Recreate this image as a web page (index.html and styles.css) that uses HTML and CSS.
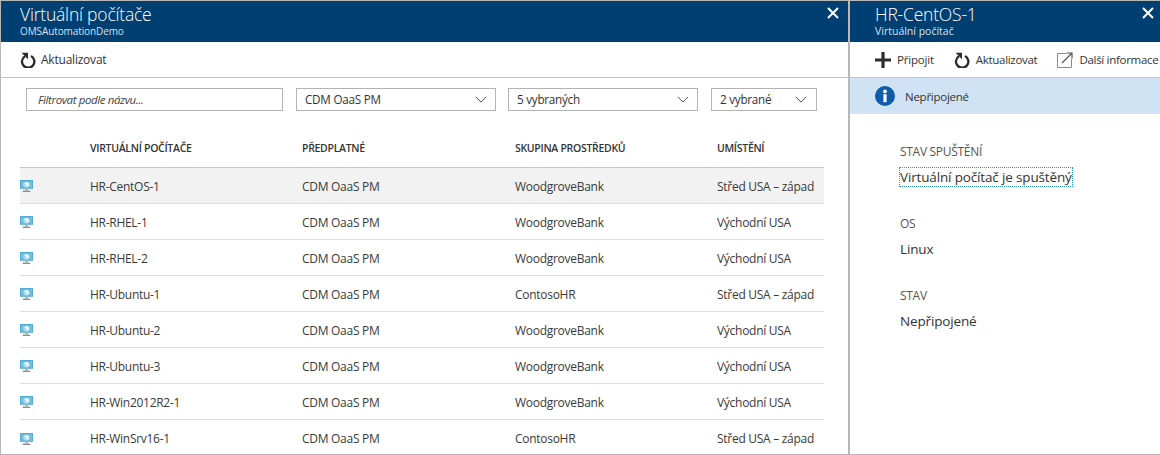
FILE: index.html
```html
<!DOCTYPE html>
<html lang="cs">
<head>
<meta charset="utf-8">
<title>Virtuální počítače</title>
<link rel="stylesheet" href="styles.css">
</head>
<body>
<svg width="0" height="0" class="defs">
  <defs>
    <symbol id="refresh" viewBox="0 0 16 16">
      <path d="M5 4.2A6.2 6.2 0 1 0 11 4" fill="none" stroke="currentColor" stroke-width="2.3"/>
      <path d="M1.6 .8H8V7.2Z" fill="currentColor"/>
    </symbol>
    <symbol id="vm" viewBox="0 0 14 13">
      <rect x="0" y="0" width="14" height="9.5" fill="#4fa6cf"/>
      <rect x="1" y="1" width="12" height="7.5" fill="#6fc0de"/>
      <path d="M7 2 10 3.5V6.5L7 8 4 6.5V3.5Z" fill="#e8f5fa"/>
      <path d="M7 5V8L4 6.5V3.5Z" fill="#a9dcee"/>
      <rect x="5.5" y="9.5" width="3" height="2" fill="#b5b6b7"/>
      <rect x="3" y="11.5" width="8" height="1.5" fill="#8d8d8d"/>
    </symbol>
    <symbol id="chev" viewBox="0 0 14 8">
      <path d="M1 1 7 7 13 1" fill="none" stroke="currentColor" stroke-width="1.1"/>
    </symbol>
    <symbol id="close" viewBox="0 0 12 12">
      <path d="M1 1 11 11M11 1 1 11" fill="none" stroke="currentColor" stroke-width="2"/>
    </symbol>
  </defs>
</svg>
<div class="app">
  <section class="blade blade-list">
    <header class="head">
      <div class="head-text">
        <h1 class="title">Virtuální počítače</h1>
        <p class="subtitle">OMSAutomationDemo</p>
      </div>
      <svg class="close"><use href="#close"/></svg>
    </header>
    <div class="toolbar">
      <span class="cmd"><svg class="ico"><use href="#refresh"/></svg>Aktualizovat</span>
    </div>
    <div class="filters">
      <div class="field field-name"><em>Filtrovat podle názvu...</em></div>
      <div class="field field-sub"><span>CDM OaaS PM</span><svg class="chev"><use href="#chev"/></svg></div>
      <div class="field field-group"><span>5 vybraných</span><svg class="chev"><use href="#chev"/></svg></div>
      <div class="field field-loc"><span>2 vybrané</span><svg class="chev"><use href="#chev"/></svg></div>
    </div>
    <div class="table">
      <div class="row row-head"><span></span><span>VIRTUÁLNÍ POČÍTAČE</span><span>PŘEDPLATNÉ</span><span>SKUPINA PROSTŘEDKŮ</span><span>UMÍSTĚNÍ</span></div>
      <div class="row row-active"><svg class="vm"><use href="#vm"/></svg><span>HR-CentOS-1</span><span>CDM OaaS PM</span><span>WoodgroveBank</span><span>Střed USA – západ</span></div>
      <div class="row"><svg class="vm"><use href="#vm"/></svg><span>HR-RHEL-1</span><span>CDM OaaS PM</span><span>WoodgroveBank</span><span>Východní USA</span></div>
      <div class="row"><svg class="vm"><use href="#vm"/></svg><span>HR-RHEL-2</span><span>CDM OaaS PM</span><span>WoodgroveBank</span><span>Východní USA</span></div>
      <div class="row"><svg class="vm"><use href="#vm"/></svg><span>HR-Ubuntu-1</span><span>CDM OaaS PM</span><span>ContosoHR</span><span>Střed USA – západ</span></div>
      <div class="row"><svg class="vm"><use href="#vm"/></svg><span>HR-Ubuntu-2</span><span>CDM OaaS PM</span><span>WoodgroveBank</span><span>Východní USA</span></div>
      <div class="row"><svg class="vm"><use href="#vm"/></svg><span>HR-Ubuntu-3</span><span>CDM OaaS PM</span><span>WoodgroveBank</span><span>Východní USA</span></div>
      <div class="row"><svg class="vm"><use href="#vm"/></svg><span>HR-Win2012R2-1</span><span>CDM OaaS PM</span><span>WoodgroveBank</span><span>Východní USA</span></div>
      <div class="row row-last"><svg class="vm"><use href="#vm"/></svg><span>HR-WinSrv16-1</span><span>CDM OaaS PM</span><span>ContosoHR</span><span>Střed USA – západ</span></div>
    </div>
  </section>
  <section class="blade blade-detail">
    <header class="head head-detail">
      <div class="head-text">
        <h1 class="title">HR-CentOS-1</h1>
        <p class="subtitle subtitle-detail">Virtuální počítač</p>
      </div>
      <svg class="close"><use href="#close"/></svg>
    </header>
    <div class="toolbar toolbar-detail">
      <span class="cmd cmd-plus">
        <svg class="ico-plus" viewBox="0 0 16 16"><path d="M6.4 0H9.6V6.4H16V9.6H9.6V16H6.4V9.6H0V6.4H6.4Z" fill="currentColor"/></svg>Připojit</span>
      <span class="cmd"><svg class="ico"><use href="#refresh"/></svg>Aktualizovat</span>
      <span class="cmd"><svg class="ico-open" viewBox="0 0 16 16"><path d="M9 1.5H.5V15.5H14.5V7" fill="none" stroke="#8a8a8a" stroke-width="1"/><path d="M5 11 14.5 1.5M9.5 1H15V6.5" fill="none" stroke="#555" stroke-width="1.2"/></svg>Další informace</span>
    </div>
    <div class="notice">
      <svg class="info" viewBox="0 0 20 20"><circle cx="10" cy="10" r="10" fill="#0f5cab"/><rect x="8.4" y="8.2" width="3.2" height="8" fill="#fff"/><circle cx="10" cy="5.4" r="1.9" fill="#fff"/></svg>
      <span>Nepřipojené</span>
    </div>
    <dl class="props">
      <dt>STAV SPUŠTĚNÍ</dt>
      <dd><span class="focus">Virtuální počítač je spuštěný</span></dd>
      <dt>OS</dt>
      <dd>Linux</dd>
      <dt>STAV</dt>
      <dd>Nepřipojené</dd>
    </dl>
  </section>
</div>
</body>
</html>
```
FILE: styles.css
```css
* { box-sizing: border-box; }
html, body { margin: 0; padding: 0; }
body {
  width: 1160px;
  height: 455px;
  overflow: hidden;
  background: #fff;
  color: #3a3a3a;
  font-family: "Open Sans", "Noto Sans", sans-serif;
  font-size: 12px;
}
.defs { position: absolute; }
.app {
  display: flex;
  height: 455px;
  border: 1px solid #b8b8b8;
  border-right: 0;
  overflow: hidden;
}
.blade { height: 100%; overflow: hidden; }
.blade-list { width: 847px; flex: none; }
.blade-detail { flex: 1; border-left: 2px solid #b8b8b8; }
.head {
  height: 41px;
  background: #003f72;
  color: #fff;
  display: flex;
  justify-content: space-between;
  padding: 0 9px 0 19px;
}
.head-detail { padding: 0 6px 0 25px; }
.title {
  margin: 2px 0 0;
  font-size: 17.5px;
  line-height: 22px;
  font-weight: 300;
  letter-spacing: -0.2px;
}
.subtitle {
  margin: 0;
  font-size: 10px;
  line-height: 12px;
  color: #d5e1ec;
  letter-spacing: -0.1px;
}
.subtitle-detail { letter-spacing: 0; font-size: 10.5px; }
.close { width: 12px; height: 12px; margin-top: 6px; color: #fff; }
.toolbar {
  height: 36px;
  border-bottom: 1px solid #c4c4c4;
  display: flex;
  align-items: center;
  padding-left: 19px;
}
.toolbar-detail { padding-left: 25px; gap: 20px; }
.cmd {
  display: flex;
  align-items: center;
  gap: 5px;
  font-size: 12px;
  letter-spacing: -0.22px;
  color: #333;
  white-space: nowrap;
}
.toolbar-detail .cmd { font-size: 11.5px; letter-spacing: -0.3px; gap: 6px; }
.toolbar-detail .cmd-plus { letter-spacing: -0.2px; }
.ico { width: 16px; height: 16px; color: #2c2c2c; flex: none; }
.ico-plus { width: 16px; height: 16px; color: #2c2c2c; flex: none; }
.ico-open { width: 16px; height: 16px; flex: none; }
.filters {
  display: flex;
  padding: 10px 0 0 25px;
  height: 49px;
}
.field {
  height: 23px;
  border: 1px solid #b3b3b3;
  display: flex;
  align-items: center;
  justify-content: space-between;
  padding: 0 8px 1px;
  font-size: 11.7px;
  letter-spacing: -0.25px;
  color: #333;
}
.field em { font-style: italic; color: #444; font-size: 11.5px; letter-spacing: -0.4px; padding-left: 3px; }
.field-name { width: 257px; margin-right: 13px; }
.field-sub { width: 200px; margin-right: 12px; }
.field-group { width: 190px; margin-right: 13px; }
.field-loc { width: 106px; padding-right: 9px; }
.chev { width: 12px; height: 7px; color: #444; flex: none; }
.table { margin-left: 19px; width: 804px; }
.row {
  display: grid;
  grid-template-columns: 70px 212px 213px 202px 1fr;
  align-items: center;
  height: 36px;
  padding-top: 1px;
  border-bottom: 1px solid #dedede;
  font-size: 12px;
  letter-spacing: -0.28px;
  color: #3a3a3a;
  white-space: nowrap;
}
.row-head {
  height: 41px;
  padding-top: 2px;
  font-size: 10.5px;
  font-weight: 600;
  color: #333;
  letter-spacing: -0.3px;
  border-bottom-color: #c8c8c8;
}
.row-active { background: #f2f2f2; }
.row-last { border-bottom: 0; }
.vm { width: 13px; height: 12px; }
.notice {
  height: 36px;
  background: #cfe3f5;
  display: flex;
  align-items: center;
  padding-left: 25px;
  gap: 10px;
  font-size: 11.5px;
  letter-spacing: -0.25px;
  color: #333;
}
.info { width: 20px; height: 20px; flex: none; }
.props { margin: 0; padding: 0 0 0 50px; }
.props dt {
  font-size: 12px;
  line-height: 16px;
  color: #555;
  letter-spacing: -0.3px;
}
.props dt:first-of-type { margin-top: 30px; }
.props dd {
  margin: 8px 0 30px;
  font-size: 13.5px;
  line-height: 18px;
  letter-spacing: -0.15px;
  color: #333;
}
.focus { display: inline-block; outline: 1px dotted #2a9cc4; }
```
